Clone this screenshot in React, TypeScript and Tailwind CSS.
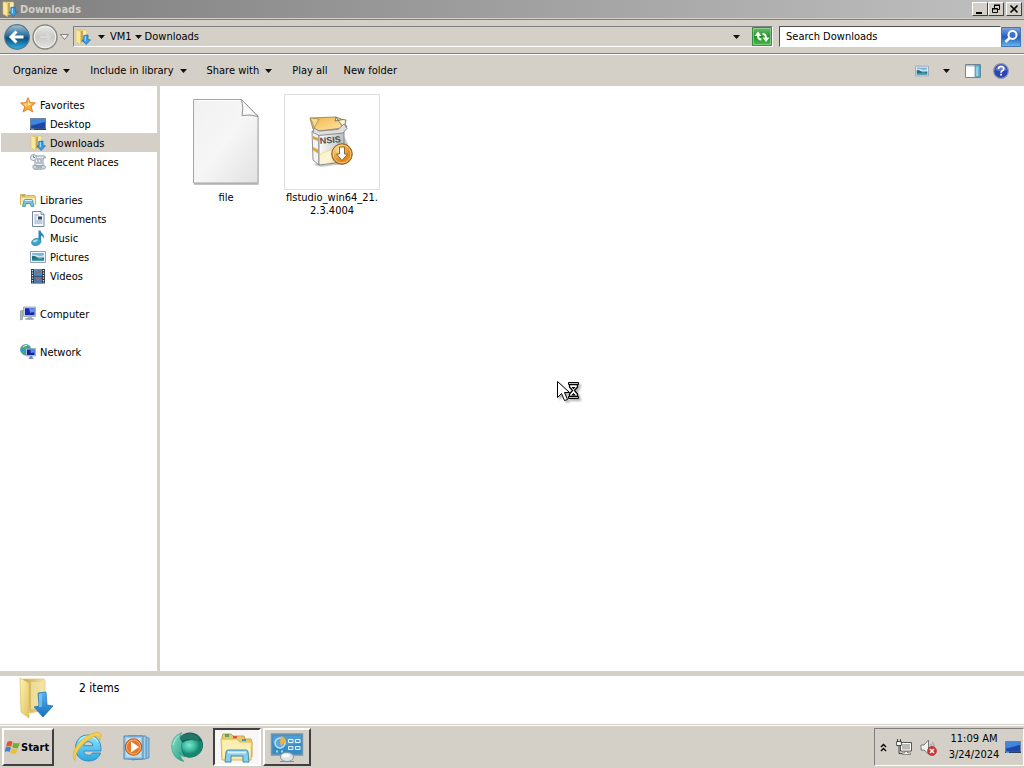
import React from "react";

type IconProps = { className?: string };

function DownloadsIcon({ className }: IconProps) {
  return (
    <svg viewBox="0 0 36 42" className={className} aria-hidden="true">
      <defs>
        <linearGradient id="dl-front" x1="0" x2="1" y1="0" y2="1">
          <stop offset="0" stopColor="#fdf3b4" />
          <stop offset="1" stopColor="#e3c25e" />
        </linearGradient>
        <linearGradient id="dl-back" x1="0" x2="1">
          <stop offset="0" stopColor="#c9a544" />
          <stop offset="1" stopColor="#f6e7a3" />
        </linearGradient>
        <linearGradient id="dl-arrow" x1="0" x2="0" y1="0" y2="1">
          <stop offset="0" stopColor="#5bb4ee" />
          <stop offset="1" stopColor="#1670bd" />
        </linearGradient>
      </defs>
      <path d="M5 2h21l1 2v29l-15 3z" fill="url(#dl-back)" stroke="#dcc377" strokeWidth="0.7" />
      <path d="M13 5h12v27H13z" fill="#f3e5ab" opacity="0.7" />
      <path d="M2 1l9 5v35l-8-6z" fill="url(#dl-front)" stroke="#d9bd63" strokeWidth="0.7" />
      <path d="M20 16l8-1 1 13 6 1-10 11-9-10 5-1z" fill="url(#dl-arrow)" stroke="#2377b8" strokeWidth="0.8" />
      <path d="M21 17l3-.4V30h-3z" fill="#93d4f8" opacity="0.6" />
    </svg>
  );
}

function DownloadsSmallIcon({ className }: IconProps) {
  return (
    <svg viewBox="0 0 16 16" className={className} aria-hidden="true">
      <path d="M2 1h9.500v11.500L5 14z" fill="#ecd582" stroke="#d5b65c" strokeWidth="0.6" />
      <path d="M6 2h3v11H6z" fill="#c9a750" />
      <path d="M8 1.500h3.500V11H8z" fill="#f8eab0" />
      <path d="M1 .8l4.500 1.400v13.300L1 13z" fill="#f9e89c" stroke="#dcbf64" strokeWidth="0.6" />
      <path d="M8.800 6.500l4.200-.5v4.800h2.500l-4.300 4.700L7 11h1.800z" fill="#3b9fe6" stroke="#1c6db0" strokeWidth="0.8" />
      <path d="M9.800 7.300h1.200V12H9.800z" fill="#9fd9fa" />
    </svg>
  );
}

function StarIcon({ className }: IconProps) {
  return (
    <svg viewBox="0 0 16 16" className={className} aria-hidden="true">
      <path d="M8 .7l2 4.900 5.300.3-4.100 3.500 1.400 5.500L8 12l-4.800 2.900 1.600-5.300L.7 6l5.300-.4z" fill="#fbb034" stroke="#d9742a" strokeWidth="0.9" strokeLinejoin="round" />
      <path d="M8 2.500l1.300 4 3.200.2L8 8.500z" fill="#ffe9a0" />
      <path d="M3 6.700l3.400-.2L8 8.500l-2.300 1z" fill="#ffd777" />
    </svg>
  );
}

function DesktopIcon({ className }: IconProps) {
  return (
    <svg viewBox="0 0 16 16" className={className} aria-hidden="true">
      <path d="M.5 2.500h15v10H.5z" fill="#2458b4" stroke="#6c83a8" />
      <path d="M1 3h14v3Q8 9 1 9z" fill="#3f86dc" />
      <path d="M1 11q7-4 14-5v6.500H1z" fill="#1a44a4" opacity="0.8" />
      <path d="M0 12.500h16v1.500H0z" fill="#2c405c" />
      <path d="M1 12.700h3v1H1z" fill="#7fc3ec" />
    </svg>
  );
}

function RecentIcon({ className }: IconProps) {
  return (
    <svg viewBox="0 0 16 16" className={className} aria-hidden="true">
      <path d="M5 2h9q1.500 0 1.500 2H13v9q0 2-2 2H4q2-1 1-4z" fill="#eef1f4" stroke="#8b969f" />
      <path d="M3 11.500h10.500q2 0 2 1.800t-2 1.700H4q-1.500-.5-1-3.500z" fill="#d3d9de" stroke="#8b969f" strokeWidth="0.8" />
      <path d="M7 5h5M7 7h2m1 0h2M6 9h6M6 13h6" stroke="#71818f" strokeWidth="0.9" />
      <circle cx="3.500" cy="3.500" r="3" fill="#e5eef4" stroke="#8795a2" strokeWidth="0.9" />
      <path d="M3.500 1.500v2h1.500" fill="none" stroke="#51647a" strokeWidth="0.8" />
    </svg>
  );
}

function LibrariesIcon({ className }: IconProps) {
  return (
    <svg viewBox="0 0 16 16" className={className} aria-hidden="true">
      <path d="M.5 2.500h5l1 1h8l1 1v8H.5z" fill="#e9cf75" stroke="#c4a64e" strokeWidth="0.8" />
      <path d="M2 3.300h3v1H2z" fill="#66a95f" />
      <path d="M1 6h14v7H1z" fill="#faebb0" />
      <path d="M2.500 14.500L4 8.500q.3-1 1.300-1h6q1 0 1.200 1l1.500 6h-3l-.6-3H6l-.7 3z" fill="#73c0e2" stroke="#3f91b6" strokeWidth="0.8" />
      <path d="M4.800 8.500h7" stroke="#d2f1fc" />
    </svg>
  );
}

function DocumentIcon({ className }: IconProps) {
  return (
    <svg viewBox="0 0 16 16" className={className} aria-hidden="true">
      <path d="M2.500.5h8.500l3 3v12H2.500z" fill="#f7faff" stroke="#75889c" />
      <path d="M11 .5v3h3" fill="#cbd8e6" stroke="#75889c" strokeWidth="0.8" />
      <path d="M4.500 4h4M4.500 6h2M4.500 8h2M4.500 10h8M4.500 12h8" stroke="#7e91aa" strokeWidth="0.9" />
      <path d="M8 5.500h4v3H8z" fill="#2c4673" />
    </svg>
  );
}

function MusicIcon({ className }: IconProps) {
  return (
    <svg viewBox="0 0 16 16" className={className} aria-hidden="true">
      <path d="M8.500.5h2c.3 3 4.800 3.600 3.100 8.500-.4-2.200-1.300-3-2.600-3.400V12H8.500z" fill="#2888b5" />
      <ellipse cx="6.300" cy="12" rx="4.900" ry="3.600" transform="rotate(-18 6.300 12)" fill="#3aa2cb" stroke="#267e9f" strokeWidth="0.5" />
      <ellipse cx="5.300" cy="10.900" rx="2.600" ry="1.200" transform="rotate(-18 5.300 10.900)" fill="#abe2ef" />
    </svg>
  );
}

function PictureIcon({ className }: IconProps) {
  return (
    <svg viewBox="0 0 16 16" className={className} aria-hidden="true">
      <path d="M.5 2.500h15v11H.5z" fill="#f4f8fc" stroke="#8fa0b5" />
      <path d="M2 4h12v8H2z" fill="#76b8de" />
      <path d="M2 5.500q4 0 6 1t6-.5V8H2z" fill="#cbe8f5" />
      <path d="M2 7q3-1 5 1.500t7 0V12H2z" fill="#23707c" />
      <path d="M2 10.500h12V12H2z" fill="#4a9eac" />
    </svg>
  );
}

function VideoIcon({ className }: IconProps) {
  return (
    <svg viewBox="0 0 16 16" className={className} aria-hidden="true">
      <path d="M1 1h14v14.500H1z" fill="#293744" />
      <path d="M4 1h8v6.800H4z" fill="#4a91c5" />
      <path d="M4 8.500h8v6.500H4z" fill="#3f78b3" />
      <path d="M5 3l2 1 1-2 3 1-1 3H7L5 7zM5 10l3-1 3 2-1 2H7z" fill="#8c6a78" />
      <path d="M2.500 2v13M13.500 2v13" stroke="#dfe9ed" strokeWidth="1.300" strokeDasharray="1.300 1.200" />
    </svg>
  );
}

function ComputerIcon({ className }: IconProps) {
  return (
    <svg viewBox="0 0 16 16" className={className} aria-hidden="true">
      <path d="M.5 5l2-.8v9l-2 .7z" fill="#aeb9bb" stroke="#74858b" strokeWidth="0.6" />
      <path d="M3.500 1h12v9.500h-12z" fill="#c6d3df" stroke="#8797a7" strokeWidth="0.7" />
      <path d="M5 2.200h9.500v7H5z" fill="#1b24ac" />
      <path d="M9 2.200h5.500V6L10 6.800z" fill="#6491ea" />
      <path d="M8 10.500h3.500l1.500 3H6.500z" fill="#aab7c1" />
      <path d="M5 13h9" stroke="#7b8d9b" />
    </svg>
  );
}

function NetworkIcon({ className }: IconProps) {
  return (
    <svg viewBox="0 0 16 16" className={className} aria-hidden="true">
      <circle cx="5.800" cy="5.800" r="5.300" fill="#2e9ad4" stroke="#4b95bf" strokeWidth="0.7" />
      <path d="M2 3q3-3 6-2L6.500 4 3 5.500zM1 7l3 .5 1 2.500-1.500.5z" fill="#57b04c" />
      <path d="M3 3q2-2 4-1.500" stroke="#d9f3fb" fill="none" />
      <path d="M6 4.500h9.500V12H6z" fill="#c4d3e3" stroke="#778fa8" strokeWidth="0.6" />
      <path d="M7 5.500h7.600V11H7z" fill="#1523a0" />
      <path d="M10.500 5.500h4.100v3l-4 .5z" fill="#5786e3" />
      <path d="M10 12h2l1.500 3h-5z" fill="#6f8fc8" />
    </svg>
  );
}

function Caret() {
  return (
    <svg viewBox="0 0 7 4" className="h-1 w-[7px] shrink-0" aria-hidden="true">
      <path d="M0 0h7L3.500 4z" fill="#111" />
    </svg>
  );
}

function BackIcon() {
  return (
    <svg viewBox="0 0 26 26" className="h-[26px] w-[26px]" aria-hidden="true">
      <defs>
        <linearGradient id="back-fill" x1="0" x2="0" y1="0" y2="1">
          <stop offset="0" stopColor="#a8c3d3" />
          <stop offset="0.45" stopColor="#286d9e" />
          <stop offset="0.55" stopColor="#0a4f80" />
          <stop offset="1" stopColor="#34b4e4" />
        </linearGradient>
      </defs>
      <circle cx="13" cy="13" r="12.300" fill="url(#back-fill)" stroke="#52798f" strokeWidth="1.200" />
      <path d="M19.500 13H7.500M12.500 7.500L7 13l5.500 5.500" fill="none" stroke="#fff" strokeWidth="3" />
    </svg>
  );
}

function ForwardIcon() {
  return (
    <svg viewBox="0 0 26 26" className="h-[26px] w-[26px]" aria-hidden="true">
      <defs>
        <linearGradient id="fwd-fill" x1="0" x2="0" y1="0" y2="1">
          <stop offset="0" stopColor="#e9e9e6" />
          <stop offset="0.5" stopColor="#cac9c5" />
          <stop offset="1" stopColor="#e5e4e1" />
        </linearGradient>
      </defs>
      <circle cx="13" cy="13" r="12" fill="url(#fwd-fill)" stroke="#878783" strokeWidth="1.400" />
      <circle cx="13" cy="13" r="10.700" fill="none" stroke="#f2f2ef" />
      <path d="M8 13h9M14 9l4 4-4 4" fill="none" stroke="#d9d7d3" strokeWidth="2" />
    </svg>
  );
}

function RefreshIcon() {
  return (
    <svg viewBox="0 0 20 19" className="h-[19px] w-5" aria-hidden="true">
      <defs>
        <linearGradient id="refresh-fill" x1="0" x2="0" y1="0" y2="1">
          <stop offset="0" stopColor="#75bc75" />
          <stop offset="0.5" stopColor="#24902c" />
          <stop offset="1" stopColor="#49be4c" />
        </linearGradient>
      </defs>
      <path d="M.5.5h19v18H.5z" fill="url(#refresh-fill)" stroke="#378e3c" />
      <path d="M1.500 1.500h17v16h-17z" fill="none" stroke="#98d79a" strokeWidth="0.7" />
      <path d="M2.500 9L6 4.500 9.500 9z M10.500 10.500H17.500L14 15z" fill="#f5fff3" />
      <path d="M6 8.500q0 4 3.500 4M14 11q0-4-3.500-4" fill="none" stroke="#f5fff3" strokeWidth="2" />
    </svg>
  );
}

function SearchIcon() {
  return (
    <svg viewBox="0 0 20 20" className="h-5 w-5" aria-hidden="true">
      <defs>
        <linearGradient id="search-fill" x1="0" x2="0" y1="0" y2="1">
          <stop offset="0" stopColor="#83a8dc" />
          <stop offset="0.5" stopColor="#245ac0" />
          <stop offset="1" stopColor="#66bced" />
        </linearGradient>
      </defs>
      <path d="M.5.5h19v19H.5z" fill="url(#search-fill)" stroke="#4874ba" />
      <circle cx="11.500" cy="8" r="4" fill="#3575ca" stroke="#fff" strokeWidth="2" />
      <path d="M8.500 11l-4 4" stroke="#fff" strokeWidth="2.500" />
    </svg>
  );
}

function PaneIcon() {
  return (
    <svg viewBox="0 0 16 14" className="h-3.5 w-4" aria-hidden="true">
      <path d="M.5.5h15v13H.5z" fill="#fff" stroke="#6d8798" />
      <path d="M1 1h14v1.500H1z" fill="#b2c1c9" />
      <path d="M10 1h5v12h-5z" fill="#6cb8d4" stroke="#54849b" strokeWidth="0.7" />
      <path d="M12 3v9" stroke="#bce9f4" />
    </svg>
  );
}

function HelpIcon() {
  return (
    <svg viewBox="0 0 16 16" className="h-4 w-4" aria-hidden="true">
      <circle cx="8" cy="8" r="7.400" fill="#2c44b0" stroke="#8d98b8" strokeWidth="1.200" />
      <path d="M2.500 7Q4 2 8 2t5.500 5Q8 9 2.500 7z" fill="#667fcb" />
      <path d="M5.500 6q0-2.500 2.600-2.500T10.700 6Q10.700 7.200 9 8q-.9.500-.9 1.700" fill="none" stroke="#fff" strokeWidth="1.700" />
      <path d="M7.200 10.800H9v1.800H7.200z" fill="#fff" />
    </svg>
  );
}

function BlankFileIcon() {
  return (
    <svg viewBox="0 0 68 88" className="h-[88px] w-[68px]" aria-hidden="true">
      <defs>
        <linearGradient id="file-fill" x1="0" x2="1" y1="0" y2="1">
          <stop offset="0" stopColor="#f1f1f1" />
          <stop offset="0.5" stopColor="#f6f6f6" />
          <stop offset="1" stopColor="#e2e2e2" />
        </linearGradient>
      </defs>
      <path d="M2 3h49l16 17v67H2z" fill="#777" opacity="0.25" />
      <path d="M1.500 1.500h48l16.500 16.500v67H1.500z" fill="url(#file-fill)" stroke="#a5a5a5" />
      <path d="M2.500 2.500H49" stroke="#fff" />
      <path d="M49.500 1.500Q52 10 50 17.500q8-1.500 16 1z" fill="#fafafa" stroke="#929292" strokeLinejoin="round" />
      <path d="M2 86h64" stroke="#8a8a8a" opacity="0.6" />
    </svg>
  );
}

function InstallerIcon() {
  return (
    <svg viewBox="0 0 48 52" className="h-[52px] w-12" aria-hidden="true">
      <defs>
        <linearGradient id="nsis-gold" x1="0" x2="1" y1="0" y2="1">
          <stop offset="0" stopColor="#f3b240" />
          <stop offset="1" stopColor="#ffe9ae" />
        </linearGradient>
        <linearGradient id="nsis-front" x1="0" x2="1">
          <stop offset="0" stopColor="#fbfbfb" />
          <stop offset="1" stopColor="#bdbdbd" />
        </linearGradient>
        <radialGradient id="nsis-badge" cx="0.35" cy="0.3">
          <stop offset="0" stopColor="#ffe6a0" />
          <stop offset="1" stopColor="#e08a20" />
        </radialGradient>
      </defs>
      <path d="M6 49l7 2 24-3 3-20-4-8z" fill="#555" opacity="0.3" />
      <path d="M4 15l7 2v32l-6-5z" fill="#f4f4f4" stroke="#797979" strokeWidth="0.8" />
      <path d="M11 17l25-3v32l-25 3z" fill="url(#nsis-front)" stroke="#777" strokeWidth="0.8" />
      <path d="M12 38q8-6 23-7v14l-23 3z" fill="#f7dd8a" opacity="0.75" />
      <path d="M12 40q6-5 12-5v11l-12 2z" fill="#fffbea" opacity="0.7" />
      <path d="M5 20l5 2v3l-5-2zM5 31l5 2.500v4L5 34z" fill="#e6a42c" />
      <path d="M2 2l26-1 8 3-2 8-23 3-6-2z" fill="url(#nsis-gold)" stroke="#8a7a55" strokeWidth="0.8" />
      <path d="M2 2l9 1-5 9q-1-6-4-10z" fill="#fbd98e" stroke="#8a7a55" strokeWidth="0.6" />
      <path d="M28 1l-1 4 8-1.500 3 .5-1 4 2 3-3 2z" fill="#fff1cd" stroke="#777060" strokeWidth="0.9" />
      <path d="M6 12l5 3 19-1.500 6-5.500 3 4.500-4 4.500-24 2.500-6-3z" fill="#dedede" stroke="#777" strokeWidth="0.8" />
      <text x="12" y="28" fontFamily="Liberation Sans, sans-serif" fontSize="9" fontWeight="700" fill="#4b4b4b" transform="rotate(-5 12 28)">NSIS</text>
      <circle cx="34" cy="38" r="10.300" fill="url(#nsis-badge)" stroke="#876026" />
      <circle cx="34" cy="38" r="8.800" fill="none" stroke="#fbd28b" strokeWidth="0.8" />
      <path d="M31.500 31h5v7h3L34 44.500 28.500 38h3z" fill="#fff" stroke="#8e6427" />
    </svg>
  );
}

function WindowsFlag() {
  return (
    <svg viewBox="0 0 16 16" className="h-4 w-4 shrink-0" aria-hidden="true">
      <path d="M2.300 3q3-1.800 5.300 0L6.300 7.700q-2.600-1.500-5.400 0z" fill="#e5532b" />
      <path d="M8.500 3.500q3 1.600 6.300.2l-1.700 5q-3 1.300-5.900-.5z" fill="#73ad32" />
      <path d="M.7 8.600q2.700-1.500 5.300 0l-1.300 4.500Q2.300 11.500-.3 13z" fill="#3f83cc" />
      <path d="M6.900 9.200q3 1.700 5.900.4l-1.700 4.900q-3 1.300-5.600-.8z" fill="#f2bd2e" />
    </svg>
  );
}

function ExplorerBrowserIcon() {
  return (
    <svg viewBox="0 0 32 32" className="h-8 w-8" aria-hidden="true">
      <defs>
        <linearGradient id="ie-fill" x1="0" x2="0" y1="0" y2="1">
          <stop offset="0" stopColor="#8ee6fb" />
          <stop offset="1" stopColor="#2aa5e2" />
        </linearGradient>
      </defs>
      <path d="M17 4C9 4 4.500 9.500 4.500 17S9.500 30 17.500 30c6 0 10.500-3 12-8h-8c-1 1.600-2.200 2.300-3.900 2.300-2.800 0-4.600-1.600-4.900-4.300H30C30.500 10 25.500 4 17 4zm-4.300 10.700c.7-2.700 2.200-4 4.700-4s4.100 1.300 4.500 4z" fill="url(#ie-fill)" stroke="#2b86bf" strokeWidth="0.9" />
      <path d="M8 10q4-5 10-5 6 1 9 6" fill="none" stroke="#cdf5ff" strokeWidth="1.200" opacity="0.8" />
      <path d="M4 29.500C-1 24 5 12 15.500 5.500 22 1 29 .2 30 3.500c.5 2-.3 4-1.500 5.800.2-3.600-1.500-5-5.500-3.700C14 9.500 3.500 20.500 4 29.500z" fill="#f5cf4c" stroke="#d6a934" strokeWidth="0.6" />
    </svg>
  );
}

function MediaPlayerIcon() {
  return (
    <svg viewBox="0 0 30 28" className="h-7 w-[30px]" aria-hidden="true">
      <path d="M9 3l17 2v20l-17 2z" fill="#8fbfe0" stroke="#5e95bf" />
      <path d="M5 3h18v23H5z" fill="#a4d1ea" stroke="#5a93be" />
      <path d="M1 3h19v23H1z" fill="#9ccbe6" stroke="#4d87b4" />
      <path d="M3 5h15v19H3z" fill="#bfdeec" />
      <circle cx="10.500" cy="14" r="8.200" fill="#e77827" stroke="#bd551b" />
      <circle cx="10.500" cy="14" r="7" fill="none" stroke="#f8b577" />
      <path d="M8 8.500l8 5.500-8 5.500z" fill="#fff" />
    </svg>
  );
}

function OrbIcon() {
  return (
    <svg viewBox="0 0 34 32" className="h-8 w-[34px]" aria-hidden="true">
      <defs>
        <radialGradient id="orb-inner" cx="0.35" cy="0.3">
          <stop offset="0" stopColor="#7fe6cf" />
          <stop offset="0.6" stopColor="#3dbb9e" />
          <stop offset="1" stopColor="#178670" />
        </radialGradient>
        <linearGradient id="orb-swirl" x1="0" x2="1" y1="0" y2="1">
          <stop offset="0" stopColor="#8fe3cc" />
          <stop offset="1" stopColor="#1f9a80" />
        </linearGradient>
      </defs>
      <ellipse cx="20" cy="14" rx="13" ry="12.500" fill="#0f5f56" />
      <path d="M10 5q11-6 20 2l-4 4q-7-5-14-1z" fill="#2b7a70" opacity="0.8" />
      <path d="M12 12q7-5 14-2 3-2 6 1 2 7-3 12-6 5-13 3-5-5-4-14z" fill="url(#orb-inner)" />
      <path d="M1.500 15Q2 5 12 1.500 8 6 12 11q-2 9 3 15-5-1-5-5 0 6 4 9.500Q2 28 1.500 15z" fill="url(#orb-swirl)" stroke="#259b83" strokeWidth="0.5" />
      <path d="M3 14q2-7 6-9.500" fill="none" stroke="#c0f4e7" strokeWidth="0.8" />
    </svg>
  );
}

function ExplorerIcon() {
  return (
    <svg viewBox="0 0 34 32" className="h-8 w-[34px]" aria-hidden="true">
      <path d="M2 6l1-3h8l2 2h11l1 3h6l1 3v15H2z" fill="#e6c96c" stroke="#c6a64d" />
      <path d="M5 3h4v3H5z" fill="#5ca55c" />
      <path d="M13 5h4v2.500h-4z" fill="#d95145" />
      <path d="M22 8h4v2h-4z" fill="#4f8cc8" />
      <path d="M1 8h16l3 3h12l-1 18H2z" fill="#f8e9a1" stroke="#d3b95e" />
      <path d="M3 10h13l3 3h11v12H3z" fill="#fff6c9" opacity="0.5" />
      <path d="M5 31l1-10q.3-2 2.300-2h17.400q2 0 2.300 2l1 10h-6v-6H11v6z" fill="#8accea" stroke="#3f8ab5" />
      <path d="M8 21.500h18" stroke="#d1effc" strokeWidth="2" />
    </svg>
  );
}

function ControlPanelIcon() {
  return (
    <svg viewBox="0 0 34 32" className="h-8 w-[34px]" aria-hidden="true">
      <path d="M1.500 3h31v21h-31z" fill="#378cc8" stroke="#7197b2" strokeWidth="1.500" />
      <path d="M3 4.500h28V12Q16 16 3 12z" fill="#4f9dd2" />
      <circle cx="10" cy="12" r="5" fill="#5ba8da" stroke="#c4e2f2" strokeWidth="1.500" />
      <path d="M10 12l1-7q4.500 1 5 6l-3.500 2-1 3z" fill="#edb540" />
      <path d="M18.500 8.500h4.500v3h-4.500zm7 0H30v3h-4.500zM18.500 15.500h4.500v3h-4.500zm7 0H30v3h-4.500z" fill="#4b9ad2" stroke="#e6f6fc" />
      <path d="M6 19.500h2v2H6zm5 0h2v2h-2z" fill="#a9dcc0" />
      <ellipse cx="17" cy="26" rx="6.500" ry="4.500" fill="#dce2e6" stroke="#8798a3" />
      <ellipse cx="15.500" cy="24.500" rx="4" ry="2" fill="#fff" opacity="0.8" />
      <path d="M10 30.500h14" stroke="#8193a0" />
    </svg>
  );
}

function TrayNetworkIcon() {
  return (
    <svg viewBox="0 0 16 16" className="h-4 w-4" aria-hidden="true">
      <path d="M4.500 3.500h11v8.500h-11z" fill="#b9b9b5" stroke="#555" />
      <path d="M5.500 4.500h9v6.500h-9z" fill="none" stroke="#fff" />
      <path d="M8.500 12.500h3v1.500h3v1.500H6V14h2.500z" fill="#f5f5f5" stroke="#666" strokeWidth="0.7" />
      <path d="M1.500 0v2.500M4.500 0v2.500M.7 2.500h4.600v4H.7zM3 6.500v8h3" fill="none" stroke="#444" />
      <path d="M1.200 3h3.600v3H1.200z" fill="#fff" />
    </svg>
  );
}

function TrayVolumeIcon() {
  return (
    <svg viewBox="0 0 17 17" className="h-[17px] w-[17px]" aria-hidden="true">
      <path d="M1 6h3l4.500-5v14L4 11H1z" fill="#f3f3f1" stroke="#777" />
      <path d="M10.500 5q1.500 2 1 4M12.500 3q2 3 1.500 6" fill="none" stroke="#999" />
      <circle cx="12" cy="12" r="4.500" fill="#d33434" stroke="#a42b2b" strokeWidth="0.6" />
      <path d="M10 10l4 4m0-4l-4 4" stroke="#fff" strokeWidth="1.500" />
    </svg>
  );
}

type NavEntry = { label: string; Icon: React.ComponentType<IconProps>; active?: boolean };
const navGroups: { head: NavEntry; items: NavEntry[] }[] = [
  {
    head: { label: "Favorites", Icon: StarIcon },
    items: [
      { label: "Desktop", Icon: DesktopIcon },
      { label: "Downloads", Icon: DownloadsSmallIcon, active: true },
      { label: "Recent Places", Icon: RecentIcon },
    ],
  },
  {
    head: { label: "Libraries", Icon: LibrariesIcon },
    items: [
      { label: "Documents", Icon: DocumentIcon },
      { label: "Music", Icon: MusicIcon },
      { label: "Pictures", Icon: PictureIcon },
      { label: "Videos", Icon: VideoIcon },
    ],
  },
  { head: { label: "Computer", Icon: ComputerIcon }, items: [] },
  { head: { label: "Network", Icon: NetworkIcon }, items: [] },
];

function NavLink({ entry, nested }: { entry: NavEntry; nested?: boolean }) {
  const { Icon } = entry;
  return (
    <a
      href="#"
      aria-current={entry.active ? "page" : undefined}
      className={`ml-px flex h-[19px] items-center gap-1 ${nested ? "pl-[29px]" : "pl-[19px]"} ${entry.active ? "bg-[#d4d0c8]" : ""}`}
    >
      <Icon className="h-4 w-4 shrink-0" />
      <span className="pt-0.5">{entry.label}</span>
    </a>
  );
}

const captionButton =
  "flex h-3.5 w-4 items-center justify-center border border-t-white border-l-white border-r-[#404040] border-b-[#404040] bg-[#d4d0c8]";
const raised = "border-2 border-t-white border-l-white border-r-[#404040] border-b-[#404040]";

export default function App() {
  return (
    <div className="relative flex h-screen flex-col overflow-hidden bg-[#d4d0c8] font-['DejaVu_Sans_Condensed','Noto_Sans',sans-serif] text-[11px] leading-[13px] text-black">
      <header className="flex h-[18px] shrink-0 items-center bg-linear-to-r from-[#808080] to-[#c0c0c0] pr-0.5 pl-0.5">
        <DownloadsSmallIcon className="h-4 w-4" />
        <h1 className="ml-0.5 flex-1 font-bold text-[#d4d0c8]">Downloads</h1>
        <button aria-label="Minimize" className={captionButton}>
          <svg viewBox="0 0 10 10" className="h-2.5 w-2.5"><path d="M1 8h6v2H1z" /></svg>
        </button>
        <button aria-label="Restore" className={captionButton}>
          <svg viewBox="0 0 10 10" className="h-2.5 w-2.5" fill="none" stroke="#000"><path d="M3.500 4V1.500h5v4H7M3 1.500h6M1.500 4.500h5v4h-5zM1 5h6M3 1h6" /></svg>
        </button>
        <button aria-label="Close" className={`${captionButton} ml-0.5`}>
          <svg viewBox="0 0 10 10" className="h-2.5 w-2.5"><path d="M1.500 1.500l7 7m0-7l-7 7" stroke="#000" strokeWidth="1.600" /></svg>
        </button>
      </header>

      <div className="mt-px flex h-[35px] shrink-0 items-center border-t border-b border-[#808080] pr-[3px] pl-1">
        <button aria-label="Back" className="shrink-0"><BackIcon /></button>
        <button aria-label="Forward" className="ml-0.5 shrink-0"><ForwardIcon /></button>
        <button aria-label="Recent pages" className="mx-0.5 shrink-0">
          <svg viewBox="0 0 9 6" className="h-1.5 w-[9px]"><path d="M.5.5h8L4.500 5.500z" fill="#f4f3ef" stroke="#77756f" strokeWidth="0.9" /></svg>
        </button>
        <nav aria-label="Address" className="ml-0.5 flex h-[21px] flex-1 items-center border border-t-[#808080] border-r-white border-b-white border-l-[#808080] pl-px">
          <DownloadsSmallIcon className="h-4 w-4" />
          <span className="ml-1 flex w-[13px] justify-center"><Caret /></span>
          <a href="#" className="ml-0.5">VM1</a>
          <span className="flex w-[13px] justify-center"><Caret /></span>
          <a href="#">Downloads</a>
          <button aria-label="Previous locations" className="mr-2 ml-auto flex h-4 w-4 items-center justify-center"><Caret /></button>
          <button aria-label="Refresh" className="shrink-0"><RefreshIcon /></button>
        </nav>
        <form className="ml-1.5 flex h-[21px] items-center" onSubmit={(e) => e.preventDefault()}>
          <input
            aria-label="Search Downloads"
            placeholder="Search Downloads"
            className="h-[21px] w-[222px] border border-t-[#505050] border-r-white border-b-white border-l-[#505050] bg-white pl-1.5 outline-none placeholder:text-black"
          />
          <button aria-label="Search" className="shrink-0"><SearchIcon /></button>
        </form>
      </div>

      <div className="flex h-8 shrink-0 items-center border-t border-white pr-[15px] pl-[13px]">
        <button className="flex items-center gap-1.5">Organize <Caret /></button>
        <button className="ml-5 flex items-center gap-1.5">Include in library <Caret /></button>
        <button className="ml-5 flex items-center gap-1.5">Share with <Caret /></button>
        <button className="ml-5">Play all</button>
        <button className="ml-4">New folder</button>
        <button aria-label="Change your view" className="ml-auto"><PictureIcon className="h-3.5 w-3.5" /></button>
        <button aria-label="More view options" className="ml-1.5 flex h-4 w-[22px] items-center justify-center"><Caret /></button>
        <button aria-label="Show the preview pane" className="ml-2"><PaneIcon /></button>
        <button aria-label="Help" className="ml-3"><HelpIcon /></button>
      </div>

      <div className="flex min-h-0 flex-1">
        <nav aria-label="Navigation pane" className="flex w-40 shrink-0 flex-col gap-[19px] border-r-[3px] border-[#d4d0c8] bg-white pt-[9px]">
          {navGroups.map((group) => (
            <div key={group.head.label}>
              <NavLink entry={group.head} />
              {group.items.map((item) => (
                <NavLink key={item.label} entry={item} nested />
              ))}
            </div>
          ))}
        </nav>
        <main className="flex flex-1 items-start bg-white pt-2 pl-[13px]">
          <button className="flex w-[106px] flex-col items-center">
            <span className="flex h-24 items-center justify-center"><BlankFileIcon /></span>
            <span className="mt-px">file</span>
          </button>
          <button className="flex w-[106px] flex-col items-center">
            <span className="flex h-24 w-24 items-center justify-center border border-[#dedede]"><InstallerIcon /></span>
            <span className="mt-px">flstudio_win64_21.<br />2.3.4004</span>
          </button>
        </main>
      </div>

      <section aria-label="Details" className="flex h-[54px] shrink-0 items-start border-t-[5px] border-b border-[#d4d0c8] bg-white pl-[18px]">
        <DownloadsIcon className="mt-px h-[42px] w-9" />
        <p className="mt-1 ml-[25px] text-xs leading-4">2 items</p>
      </section>

      <footer className="flex h-[43px] shrink-0 items-center border-t border-white pl-0.5">
        <button className={`${raised} flex h-[38px] w-[52px] items-center pl-px font-bold`}>
          <WindowsFlag />
          Start
        </button>
        <button aria-label="Internet Explorer" className="ml-[17px]"><ExplorerBrowserIcon /></button>
        <button aria-label="Media Player" className="ml-5"><MediaPlayerIcon /></button>
        <button aria-label="Web browser" className="ml-[17px]"><OrbIcon /></button>
        <button aria-label="File Explorer" className="ml-[9px] flex h-[38px] w-12 items-center justify-center border-2 border-t-[#404040] border-r-white border-b-white border-l-[#404040] bg-[#f8f7f5]">
          <ExplorerIcon />
        </button>
        <button aria-label="Control Panel" className={`${raised} ml-0.5 flex h-[38px] w-12 items-center justify-center`}>
          <ControlPanelIcon />
        </button>
        <div className="ml-auto flex h-[38px] items-center border border-t-[#808080] border-r-white border-b-white border-l-[#808080] pr-0.5 pl-[5px]">
          <button aria-label="Show hidden icons">
            <svg viewBox="0 0 7 9" className="h-[9px] w-[7px]" fill="none" stroke="#000" strokeWidth="1.400"><path d="M1 4l2.500-2.500L6 4M1 8l2.500-2.500L6 8" /></svg>
          </button>
          <button aria-label="Network status" className="ml-[9px]"><TrayNetworkIcon /></button>
          <button aria-label="Volume muted" className="ml-2"><TrayVolumeIcon /></button>
          <time className="ml-2.5 w-[54px] text-center leading-4" dateTime="2024-03-24T11:09">
            <span className="block whitespace-nowrap">11:09 AM</span>
            <span className="flex justify-center whitespace-nowrap">3/24/2024</span>
          </time>
          <button aria-label="Show desktop" className="ml-1"><DesktopIcon className="h-4 w-4" /></button>
        </div>
      </footer>

      <svg viewBox="0 0 24 22" className="pointer-events-none absolute top-[381px] left-[557px] h-[22px] w-6 drop-shadow-[2px_2px_1px_rgba(0,0,0,0.3)]" aria-hidden="true">
        <path d="M.5.500v16l4-4 3 7 3-1-3-7h5z" fill="#fff" stroke="#000" />
        <path d="M11.500 1.500h10v2h-10zM11.500 15.500h10v2h-10z" fill="#fff" stroke="#000" />
        <path d="M12.500 3.500h8v2.500l-3 3.500 3 3.500v2.500h-8V13l3-3.500-3-3.500z" fill="#fff" stroke="#000" strokeWidth="1.300" />
        <path d="M14.500 6h4l-2 2.500zM14 14.500h5L16.500 12z" fill="#000" />
      </svg>
    </div>
  );
}
